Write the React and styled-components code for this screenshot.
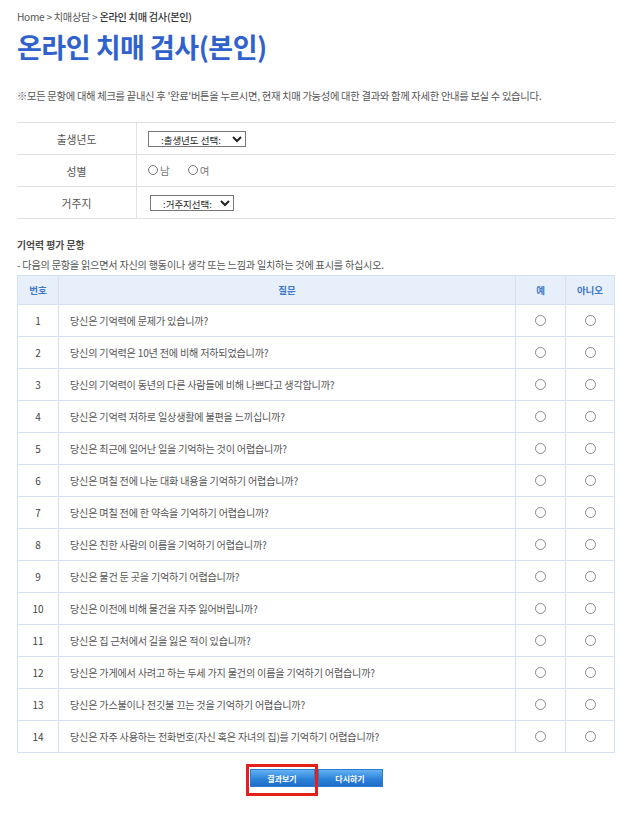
import React from 'react';
import styled, { createGlobalStyle } from 'styled-components';

const questions = [
  '당신은 기억력에 문제가 있습니까?',
  '당신의 기억력은 10년 전에 비해 저하되었습니까?',
  '당신의 기억력이 동년의 다른 사람들에 비해 나쁘다고 생각합니까?',
  '당신은 기억력 저하로 일상생활에 불편을 느끼십니까?',
  '당신은 최근에 일어난 일을 기억하는 것이 어렵습니까?',
  '당신은 며칠 전에 나눈 대화 내용을 기억하기 어렵습니까?',
  '당신은 며칠 전에 한 약속을 기억하기 어렵습니까?',
  '당신은 친한 사람의 이름을 기억하기 어렵습니까?',
  '당신은 물건 둔 곳을 기억하기 어렵습니까?',
  '당신은 이전에 비해 물건을 자주 잃어버립니까?',
  '당신은 집 근처에서 길을 잃은 적이 있습니까?',
  '당신은 가게에서 사려고 하는 두세 가지 물건의 이름을 기억하기 어렵습니까?',
  '당신은 가스불이나 전깃불 끄는 것을 기억하기 어렵습니까?',
  '당신은 자주 사용하는 전화번호(자신 혹은 자녀의 집)를 기억하기 어렵습니까?',
];

const App = () => {
  return (
    <>
      <GlobalStyle />
      <Page>
        <Breadcrumb>
          Home &gt; 치매상담 &gt; <strong>온라인 치매 검사(본인)</strong>
        </Breadcrumb>
        <Title>온라인 치매 검사(본인)</Title>
        <Notice>
          ※모든 문항에 대해 체크를 끝내신 후 '완료'버튼을 누르시면, 현재 치매 가능성에 대한 결과와 함께 자세한 안내를 보실 수 있습니다.
        </Notice>

        <InfoTable>
          <tbody>
            <tr>
              <InfoLabel>출생년도</InfoLabel>
              <InfoCell>
                <Select width="98px">
                  <option>:출생년도 선택:</option>
                </Select>
              </InfoCell>
            </tr>
            <tr>
              <InfoLabel>성별</InfoLabel>
              <InfoCell>
                <RadioLabel>
                  <Circle />남
                </RadioLabel>
                <RadioLabel>
                  <Circle />여
                </RadioLabel>
              </InfoCell>
            </tr>
            <tr>
              <InfoLabel>거주지</InfoLabel>
              <InfoCell>
                <Select width="84px" indent="2px">
                  <option>:거주지선택:</option>
                </Select>
              </InfoCell>
            </tr>
          </tbody>
        </InfoTable>

        <SectionTitle>기억력 평가 문항</SectionTitle>
        <SectionDesc>
          - 다음의 문항을 읽으면서 자신의 행동이나 생각 또는 느낌과 일치하는 것에 표시를 하십시오.
        </SectionDesc>

        <QuizTable>
          <colgroup>
            <col style={{ width: '41px' }} />
            <col />
            <col style={{ width: '50px' }} />
            <col style={{ width: '49px' }} />
          </colgroup>
          <thead>
            <tr>
              <HeadCell>번호</HeadCell>
              <HeadCell>질문</HeadCell>
              <HeadCell>예</HeadCell>
              <HeadCell>아니오</HeadCell>
            </tr>
          </thead>
          <tbody>
            {questions.map((q, i) => (
              <tr key={i}>
                <NumCell>{i + 1}</NumCell>
                <QuestionCell>{q}</QuestionCell>
                <ChoiceCell>
                  <TableCircle />
                </ChoiceCell>
                <ChoiceCell>
                  <TableCircle />
                </ChoiceCell>
              </tr>
            ))}
          </tbody>
        </QuizTable>

        <ButtonRow>
          <BlueButton marked>결과보기</BlueButton>
          <BlueButton>다시하기</BlueButton>
        </ButtonRow>
      </Page>
    </>
  );
};

const GlobalStyle = createGlobalStyle`
  body {
    margin: 0;
    background: #fff;
    font-family: "Noto Sans CJK KR", "Noto Sans", sans-serif;
  }
`;

const Page = styled.div`
  width: 598px;
  padding: 9px 0 40px 17px;
`;

const Breadcrumb = styled.div`
  font-size: 10.2px;
  line-height: 16px;
  color: #555;
  letter-spacing: -0.3px;

  strong {
    color: #333;
    font-weight: 500;
  }
`;

const Title = styled.h1`
  margin: 3px 0 0;
  font-size: 27px;
  line-height: 38px;
  font-weight: 700;
  color: #2f62cc;
  letter-spacing: -0.5px;
`;

const Notice = styled.p`
  margin: 22px 0 0;
  font-size: 10.3px;
  line-height: 16px;
  color: #555;
  letter-spacing: -0.3px;
  white-space: nowrap;
`;

const InfoTable = styled.table`
  width: 100%;
  margin-top: 18px;
  border-collapse: collapse;
  border-top: 1px solid #dfe1ea;

  tr {
    border-bottom: 1px solid #dfe1ea;
  }
`;

const InfoLabel = styled.th`
  width: 119px;
  height: 31px;
  padding: 0;
  border-right: 1px solid #dfe1ea;
  font-size: 10.8px;
  font-weight: 400;
  color: #555;
  text-align: center;
`;

const InfoCell = styled.td`
  padding: 0 0 0 11px;
  font-size: 10px;
  color: #666;
`;

const Select = styled.select`
  width: ${(p) => p.width};
  height: 16px;
  margin-left: ${(p) => p.indent || '0'};
  padding: 0 0 0 8px;
  border: 1px solid #777;
  border-radius: 0;
  background: #fff;
  font-family: "Noto Sans CJK KR", sans-serif;
  font-size: 9.5px;
  color: #222;
  vertical-align: middle;
`;

const RadioLabel = styled.label`
  display: inline-flex;
  align-items: center;
  gap: 2px;
  margin-right: 18px;
  font-size: 10.5px;
  color: #777;
`;

const Circle = styled.span`
  width: 10px;
  height: 10px;
  border: 1px solid #777;
  border-radius: 50%;
  box-sizing: border-box;
  display: inline-block;
`;

const SectionTitle = styled.h3`
  margin: 19px 0 0;
  font-size: 9.8px;
  line-height: 14px;
  font-weight: 700;
  color: #4a4a4a;
`;

const SectionDesc = styled.p`
  margin: 6px 0 0;
  font-size: 10.1px;
  line-height: 14px;
  color: #555;
  letter-spacing: -0.2px;
`;

const QuizTable = styled.table`
  width: 100%;
  margin-top: 3px;
  border-collapse: collapse;
  table-layout: fixed;
  border: 1px solid #c9daee;

  td,
  th {
    border: 1px solid #d3e1f1;
  }
`;

const HeadCell = styled.th`
  height: 28px;
  padding: 0;
  background: #e7effb;
  font-size: 9.5px;
  font-weight: 700;
  color: #3f77c9;
  text-align: center;
`;

const NumCell = styled.td`
  height: 31px;
  padding: 0;
  text-align: center;
  font-size: 10px;
  color: #444;
`;

const QuestionCell = styled.td`
  padding: 0 0 0 11px;
  font-size: 10.1px;
  color: #555;
  letter-spacing: -0.2px;
  white-space: nowrap;
`;

const ChoiceCell = styled.td`
  padding: 0;
  text-align: center;
  line-height: 0;
`;

const TableCircle = styled.span`
  display: inline-block;
  width: 11px;
  height: 11px;
  border: 1px solid #8a8a8a;
  border-radius: 50%;
  box-sizing: border-box;
`;

const ButtonRow = styled.div`
  display: flex;
  justify-content: center;
  gap: 3px;
  margin-top: 16px;
`;

const BlueButton = styled.button`
  position: relative;
  width: 65px;
  height: 18px;
  padding: 0;
  border: 1px solid #2d7bd0;
  background: linear-gradient(#62b2f3, #2a80d7 60%, #1e6ec7);
  color: #fff;
  font-family: "Noto Sans CJK KR", sans-serif;
  font-size: 8px;
  font-weight: 700;
  cursor: pointer;

  &::after {
    content: '';
    display: ${(p) => (p.marked ? 'block' : 'none')};
    position: absolute;
    left: -5px;
    right: -4px;
    top: -6px;
    bottom: -10px;
    border: 3px solid #e3201b;
    pointer-events: none;
  }
`;

export default App;
